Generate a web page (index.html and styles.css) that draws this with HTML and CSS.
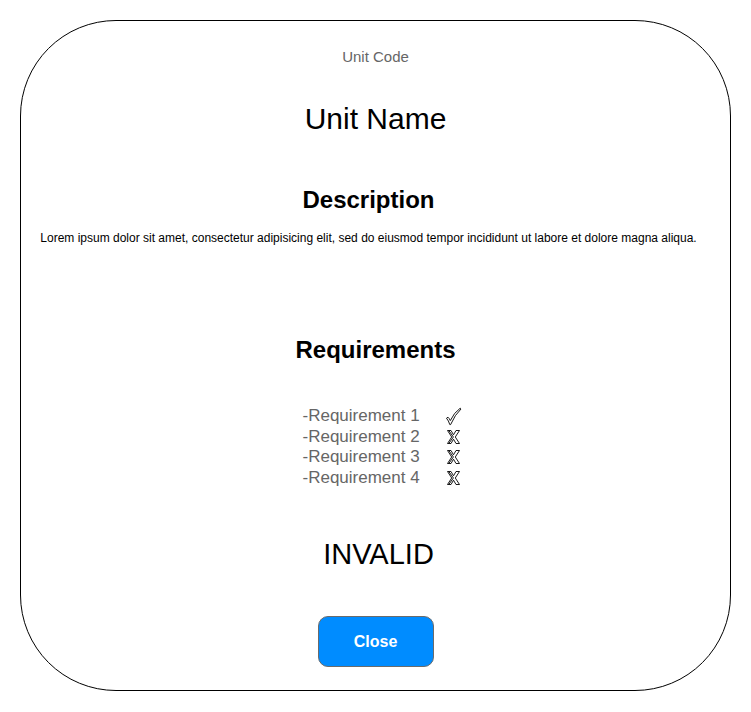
FILE: index.html
```html
<!DOCTYPE html>
<html lang="en">
<head>
<meta charset="utf-8">
<title>Unit</title>
<link rel="stylesheet" href="styles.css">
</head>
<body>
<div class="card">
  <div class="code">Unit Code</div>
  <h1 class="name">Unit Name</h1>
  <div class="desc-block">
    <h2 class="heading">Description</h2>
    <p class="lorem">Lorem ipsum dolor sit amet, consectetur adipisicing elit, sed do eiusmod tempor incididunt ut labore et dolore magna aliqua.</p>
  </div>
  <h2 class="heading req-heading">Requirements</h2>
  <div class="reqs">
    <span class="req">-Requirement 1</span>
    <span class="mark"><svg width="17" height="19" viewBox="0 0 17 19"><path d="M1.5 11.2 L3 10.2 Q4.3 11.3 5.3 13.6 Q9 5.5 15.2 1.2 L16 2 Q10 7.5 5.6 17.6 L4.8 17.6 Q3.6 13.6 1.5 11.2 Z" fill="#fff" stroke="#000" stroke-width="0.9" stroke-linejoin="round"/></svg></span>
    <span class="req">-Requirement 2</span>
    <span class="mark"><svg width="13" height="14" viewBox="0 0 13 14"><path d="M0.5 0.5 H4 L6.5 4.8 L9 0.5 H12.5 L8.3 7 L12.5 13.5 H9 L6.5 9.2 L4 13.5 H0.5 L4.7 7 Z M2 0.8 L6.4 7 L2 13.2" fill="#fff" stroke="#000" stroke-width="0.9" stroke-linejoin="round"/></svg></span>
    <span class="req">-Requirement 3</span>
    <span class="mark"><svg width="13" height="14" viewBox="0 0 13 14"><path d="M0.5 0.5 H4 L6.5 4.8 L9 0.5 H12.5 L8.3 7 L12.5 13.5 H9 L6.5 9.2 L4 13.5 H0.5 L4.7 7 Z M2 0.8 L6.4 7 L2 13.2" fill="#fff" stroke="#000" stroke-width="0.9" stroke-linejoin="round"/></svg></span>
    <span class="req">-Requirement 4</span>
    <span class="mark"><svg width="13" height="14" viewBox="0 0 13 14"><path d="M0.5 0.5 H4 L6.5 4.8 L9 0.5 H12.5 L8.3 7 L12.5 13.5 H9 L6.5 9.2 L4 13.5 H0.5 L4.7 7 Z M2 0.8 L6.4 7 L2 13.2" fill="#fff" stroke="#000" stroke-width="0.9" stroke-linejoin="round"/></svg></span>
  </div>
  <div class="status">INVALID</div>
  <button class="close" type="button">Close</button>
</div>
</body>
</html>
```

FILE: styles.css
```css
* { box-sizing: border-box; }
html, body { margin: 0; padding: 0; background: #fff; }
body {
  font-family: "Liberation Sans", Arial, sans-serif;
  color: #000;
  padding: 20px 0 0 20px;
}
.card {
  width: 711px;
  height: 671px;
  border: 1px solid #000;
  border-radius: 96px;
  padding: 27px 0 0 0;
  display: flex;
  flex-direction: column;
  align-items: center;
}
.code {
  font-size: 15px;
  line-height: 17px;
  color: #666;
}
.name {
  margin: 37px 0 0 0;
  font-size: 30px;
  font-weight: normal;
  line-height: 34px;
}
.desc-block {
  margin: 50px 14px 0 0;
  display: flex;
  flex-direction: column;
  align-items: center;
}
.heading {
  margin: 0;
  font-size: 24px;
  font-weight: bold;
  line-height: 28px;
}
.lorem {
  margin: 17px 0 0 0;
  font-size: 12px;
  line-height: 14px;
  white-space: nowrap;
}
.req-heading { margin-top: 91px; }
.reqs {
  margin-top: 42px;
  width: 174px;
  padding-left: 14px;
  display: grid;
  grid-template-columns: 142px 18px;
  grid-auto-rows: 20.5px;
  align-items: center;
}
.req {
  font-size: 17px;
  line-height: 20px;
  color: #666;
}
.mark {
  display: flex;
  justify-content: center;
  align-items: center;
}
.mark svg { display: block; }
.status {
  margin: 50px 0 0 6px;
  font-size: 29px;
  line-height: 33px;
}
.close {
  margin-top: 45px;
  width: 116px;
  height: 51px;
  background: #008cff;
  border: 1px solid #6b6b6b;
  border-radius: 10px;
  color: #fff;
  font-family: "Liberation Sans", Arial, sans-serif;
  font-size: 16px;
  font-weight: bold;
}
```
